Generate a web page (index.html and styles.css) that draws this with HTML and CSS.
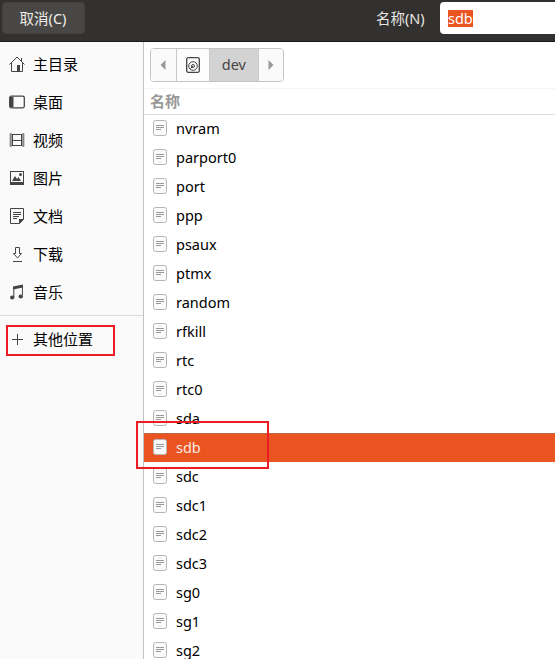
FILE: index.html
```html
<!DOCTYPE html>
<html lang="zh-CN">
<head>
<meta charset="utf-8">
<title>dev</title>
<link rel="stylesheet" href="styles.css">
</head>
<body>
<svg class="defs" width="0" height="0">
  <symbol id="file" viewBox="0 0 14 16">
    <rect class="paper" x=".5" y=".5" width="13" height="15" rx="2"/>
    <path class="lines" d="M3 5.500h8M3 7.500h8M3 9.500h5"/>
  </symbol>
</svg>
<header class="titlebar">
  <button class="cancel">取消(C)</button>
  <label class="name-label">名称(N)</label>
  <div class="name-input"><span class="selection">sdb</span></div>
</header>
<div class="content">
  <nav class="sidebar">
    <ul class="places">
      <li><svg class="icon" viewBox="0 0 16 16"><path class="s" d="M.5 8.500 8 1l7.500 7.500M2.500 7v8.500h11V7M12.500 2v3"/><path class="f" d="M8 9h3v6H8z"/></svg>主目录</li>
      <li><svg class="icon" viewBox="0 0 16 16"><rect class="s thick" x=".7" y="2.200" width="14.600" height="11.600" rx="1.500"/><path class="f" d="M1 3h3.500v10H1z"/></svg>桌面</li>
      <li><svg class="icon" viewBox="0 0 16 16"><path class="s" d="M3.500 2v12M12.500 2v12M3.500 2.500h9M3.500 8.500h9M3.500 13.500h9"/><path class="s dash" d="M2 1.500v13M14 1.500v13"/><path class="s thin" d="M1 1.500v13M15 1.500v13"/></svg>视频</li>
      <li><svg class="icon" viewBox="0 0 16 16"><rect class="s" x="1.500" y="1.500" width="13" height="13"/><path class="f" d="M1 12h14v3H1zM3 11l3-5 2 3 1.500-2L12 11z"/><circle class="f" cx="11.500" cy="4.500" r="1.500"/></svg>图片</li>
      <li><svg class="icon" viewBox="0 0 16 16"><path class="s" d="M1.500.5h13v11l-4 4h-9zM4 4.500h8M4 6.500h8M4 8.500h6M4 10.500h4"/><path class="f" d="M10 11h5l-5 5z"/></svg>文档</li>
      <li><svg class="icon" viewBox="0 0 16 16"><path class="s" d="M6.500 1.500h4v6h2L8.500 12l-4-4.500h2zM4 15.500h9"/></svg>下载</li>
      <li><svg class="icon" viewBox="0 0 16 16"><path class="f" d="M4 2.500 14 .5v3L4 5.500z"/><path class="s" d="M4.800 3v10M13.400 2v9"/><ellipse class="f" cx="3.200" cy="13.500" rx="2.200" ry="1.900"/><ellipse class="f" cx="11.800" cy="12.500" rx="2.200" ry="1.900"/></svg>音乐</li>
    </ul>
    <div class="other"><svg class="icon" viewBox="0 0 16 16"><path class="s" d="M8.500 3v11M3 8.500h11"/></svg>其他位置</div>
  </nav>
  <main class="browser">
    <div class="toolbar">
      <div class="pathbar">
        <div class="seg arrow"><svg width="6" height="10" viewBox="0 0 6 10"><path d="M5.500 0v10L.5 5z"/></svg></div>
        <div class="seg disk"><svg width="14" height="16" viewBox="0 0 14 16"><rect class="s thick" x=".7" y=".7" width="12.600" height="14.600" rx="1.500"/><circle class="s" cx="7" cy="9" r="4.300"/><circle class="s" cx="7" cy="9" r="1.500"/><path class="s" d="M7 9 4.500 11.500"/></svg></div>
        <div class="seg current">dev</div>
        <div class="seg arrow"><svg width="6" height="10" viewBox="0 0 6 10"><path d="M.5 0v10l5-5z"/></svg></div>
      </div>
    </div>
    <div class="column-head">名称</div>
    <ul class="files">
      <li><svg class="file"><use href="#file"/></svg>nvram</li>
      <li><svg class="file"><use href="#file"/></svg>parport0</li>
      <li><svg class="file"><use href="#file"/></svg>port</li>
      <li><svg class="file"><use href="#file"/></svg>ppp</li>
      <li><svg class="file"><use href="#file"/></svg>psaux</li>
      <li><svg class="file"><use href="#file"/></svg>ptmx</li>
      <li><svg class="file"><use href="#file"/></svg>random</li>
      <li><svg class="file"><use href="#file"/></svg>rfkill</li>
      <li><svg class="file"><use href="#file"/></svg>rtc</li>
      <li><svg class="file"><use href="#file"/></svg>rtc0</li>
      <li><svg class="file"><use href="#file"/></svg>sda</li>
      <li class="selected"><svg class="file"><use href="#file"/></svg>sdb</li>
      <li><svg class="file"><use href="#file"/></svg>sdc</li>
      <li><svg class="file"><use href="#file"/></svg>sdc1</li>
      <li><svg class="file"><use href="#file"/></svg>sdc2</li>
      <li><svg class="file"><use href="#file"/></svg>sdc3</li>
      <li><svg class="file"><use href="#file"/></svg>sg0</li>
      <li><svg class="file"><use href="#file"/></svg>sg1</li>
      <li><svg class="file"><use href="#file"/></svg>sg2</li>
    </ul>
  </main>
</div>
<div class="mark mark-other"></div>
<div class="mark mark-sdb"></div>
</body>
</html>
```
FILE: styles.css
```css
* { box-sizing: border-box; }
body {
  margin: 0;
  height: 659px;
  overflow: hidden;
  position: relative;
  background: #fff;
  color: #000;
  font: 14.5px "Noto Sans", "Noto Sans CJK SC", sans-serif;
}
ul { list-style: none; margin: 0; padding: 0; }
.defs { position: absolute; }
.titlebar {
  display: flex;
  height: 42px;
  padding: 2px 0 0 2px;
  background: #32312f;
  border-bottom: 1px solid #1c1b1a;
  color: #e8e6e3;
}
.cancel {
  width: 83px;
  height: 32px;
  padding: 0 1px 2px 0;
  border: 1px solid #42413f;
  border-radius: 4px;
  background: #484745;
  color: #eeece9;
  font: inherit;
}
.name-label {
  width: 51px;
  margin-left: 291px;
  line-height: 33px;
  white-space: nowrap;
}
.name-input {
  flex: 1;
  height: 32px;
  margin-left: 13px;
  padding: 8px 0 0 8px;
  border-radius: 4px 0 0 4px;
  background: #fff;
}
.selection {
  display: block;
  width: 25px;
  height: 17px;
  line-height: 17px;
  background: #e95420;
  color: #fff;
}
.content { display: flex; height: 617px; }
.sidebar {
  width: 144px;
  flex: none;
  background: #fafafa;
  border-right: 1px solid #c2c2c2;
}
.places { padding: 2px 0 5px; border-bottom: 1px solid #dadada; }
.places li, .other {
  display: flex;
  align-items: center;
  height: 38px;
  padding-left: 9px;
  gap: 8px;
  font-size: 15px;
}
.other { margin-top: 3px; }
.icon { width: 16px; height: 16px; flex: none; margin-top: 1px; }
.s { fill: none; stroke: #444; stroke-width: 1; }
.f { fill: #444; }
.thick { stroke-width: 1.3; }
.thin { stroke-width: .5; }
.dash { stroke-width: 2; stroke-dasharray: 1 1; }
.browser { flex: 1; min-width: 0; }
.toolbar { height: 47px; padding: 6px; border-bottom: 1px solid #f4f4f4; }
.pathbar {
  display: flex;
  width: 134px;
  height: 34px;
  border: 1px solid #c5c5c5;
  border-radius: 4px;
  overflow: hidden;
  background: #fcfcfc;
}
.seg { display: flex; align-items: center; justify-content: center; }
.seg + .seg { border-left: 1px solid #c9c9c9; }
.arrow { width: 25px; background: #fafafa; }
.arrow svg { fill: #999; }
.disk { width: 33px; }
.current { width: 50px; padding-bottom: 2px; background: #d3d3d3; color: #444; }
.column-head {
  height: 26px;
  padding-left: 6px;
  border-bottom: 1px solid #dedede;
  line-height: 25px;
  color: #999;
  font-size: 15px;
  font-weight: 700;
}
.files { margin-top: -1px; }
.files li {
  display: flex;
  align-items: center;
  height: 29px;
  padding-left: 9px;
  gap: 9px;
  line-height: 29px;
}
.file { width: 14px; height: 16px; flex: none; margin-bottom: 1px; }
.paper { fill: #fafafa; stroke: #b5b5b5; }
.lines { fill: none; stroke: #999; stroke-width: 1; }
.files .selected { background: #e95420; color: #fbe9e2; box-shadow: inset 0 1px #ba6946; }
.mark { position: absolute; border: 2px solid #ed1c24; }
.mark-other { left: 6px; top: 325px; width: 109px; height: 31px; }
.mark-sdb { left: 136px; top: 421px; width: 133px; height: 48px; }
```
